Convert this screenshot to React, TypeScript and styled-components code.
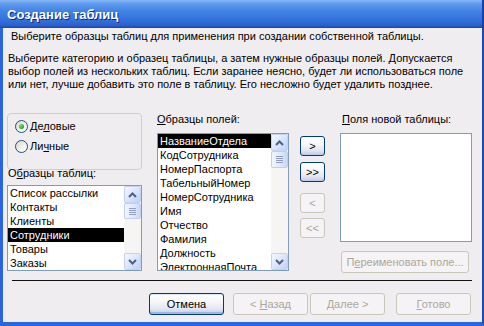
import React from 'react';
import styled, { createGlobalStyle, css } from 'styled-components';

const Global = createGlobalStyle`
  html, body { margin: 0; padding: 0; background: #ffffff; }
  body { font-family: "Liberation Sans", Arial, sans-serif; }
  * { box-sizing: border-box; }
`;

const Window = styled.div`
  width: 484px;
  height: 326px;
  display: flex;
  flex-direction: column;
  overflow: hidden;
`;

const TitleBar = styled.div`
  height: 28px;
  flex: none;
  display: flex;
  align-items: center;
  padding: 1px 0 0 7px;
  background: linear-gradient(
    to bottom,
    #86b7f6 0%,
    #5f9bee 14%,
    #4384e4 38%,
    #3372dc 70%,
    #2a62d0 90%,
    #1c45aa 100%
  );
  border-right: 2px solid #1b3ea8;
  color: #ffffff;
  font: bold 13px "Liberation Sans", Arial, sans-serif;
  text-shadow: 1px 1px 0 #0d2778;
`;

const Frame = styled.div`
  flex: 1;
  display: flex;
  flex-direction: column;
  background: #f0edf0;
  border-left: 3px solid #2b64e0;
  border-right: 2px solid #1d47bd;
  border-bottom: 4px solid #2b64e0;
  font-size: 11px;
  color: #000000;
`;

const Header = styled.div`
  padding: 2px 0 0 8px;
  line-height: 13px;
  white-space: nowrap;
`;

const Para = styled.div`
  margin-top: 9px;
  padding-left: 5px;
  line-height: 13px;
`;

const ParaLine = styled.div`
  white-space: nowrap;
`;

const Main = styled.div`
  margin-top: 22px;
  padding-left: 4px;
  display: flex;
  align-items: flex-start;
  height: 160px;
`;

const Column = styled.div<{ $w: number; $gap?: number }>`
  width: ${p => p.$w}px;
  flex: none;
  display: flex;
  flex-direction: column;
  margin-left: ${p => p.$gap ?? 0}px;
`;

const Label = styled.div<{ $ml?: number; $mt?: number; $lh?: number }>`
  margin-left: ${p => p.$ml ?? 0}px;
  margin-top: ${p => p.$mt ?? 0}px;
  line-height: ${p => p.$lh ?? 13}px;
  white-space: nowrap;
`;

const Acc = styled.span`
  text-decoration: underline;
  text-underline-offset: 1px;
`;

const GroupBox = styled.div`
  height: 57px;
  border: 1px solid #d0d0bf;
  border-radius: 4px;
  padding: 6px 0 0 7px;
  display: flex;
  flex-direction: column;
  gap: 7px;
`;

const RadioRow = styled.label`
  display: flex;
  align-items: center;
  height: 13px;
  gap: 2px;
  line-height: 13px;
`;

const RadioCircle = styled.span`
  width: 13px;
  height: 13px;
  flex: none;
  border-radius: 50%;
  border: 1px solid #1c5180;
  background: linear-gradient(135deg, #d6d5cf 0%, #f2f1ec 55%, #ffffff 100%);
  display: inline-flex;
  align-items: center;
  justify-content: center;
`;

const RadioDot = styled.span`
  width: 5px;
  height: 5px;
  border-radius: 50%;
  background: radial-gradient(circle at 35% 35%, #7ee47a 0%, #2fb12c 55%, #1a8d18 100%);
`;

const ListBox = styled.div<{ $h: number; $mt: number }>`
  height: ${p => p.$h}px;
  margin-top: ${p => p.$mt}px;
  border: 1px solid #7f9db9;
  background: #ffffff;
  display: flex;
  overflow: hidden;
`;

const Items = styled.div`
  flex: 1;
  min-width: 0;
  overflow: hidden;
`;

const Item = styled.div<{ $sel?: boolean }>`
  height: 14px;
  line-height: 14px;
  padding-left: 2px;
  white-space: nowrap;
  ${p =>
    p.$sel &&
    css`
      background: #000000;
      color: #ffffff;
    `}
`;

const ScrollBar = styled.div`
  width: 17px;
  flex: none;
  display: flex;
  flex-direction: column;
  background: #f6f5f3;
`;

const ScrollBtn = styled.div`
  width: 17px;
  height: 17px;
  flex: none;
  border: 1px solid #c4d2f2;
  border-radius: 2px;
  background: linear-gradient(135deg, #f4f7ff 0%, #dbe5fc 50%, #bfd0f6 100%);
  display: flex;
  align-items: center;
  justify-content: center;
`;

const Track = styled.div`
  flex: 1;
  display: flex;
  flex-direction: column;
`;

const Thumb = styled.div<{ $h: number }>`
  height: ${p => p.$h}px;
  border: 1px solid #c0cff0;
  border-radius: 2px;
  background: linear-gradient(to right, #f2f5fe 0%, #dfe7fb 60%, #c9d7f6 100%);
  display: flex;
  align-items: center;
  justify-content: center;
  &::after {
    content: '';
    width: 7px;
    height: 7px;
    background: repeating-linear-gradient(
      to bottom,
      #8e9dc0 0px,
      #8e9dc0 1px,
      transparent 1px,
      transparent 2px
    );
  }
`;

const ArrowCol = styled.div`
  width: 25px;
  flex: none;
  margin-left: 11px;
  display: flex;
  flex-direction: column;
`;

const XPButton = styled.button<{ $w: number; $h: number; $mt?: number; $ml?: number; $off?: boolean; $def?: boolean }>`
  width: ${p => p.$w}px;
  height: ${p => p.$h}px;
  margin-top: ${p => p.$mt ?? 0}px;
  margin-left: ${p => p.$ml ?? 0}px;
  flex: none;
  padding: 0;
  font: 11px "Liberation Sans", Arial, sans-serif;
  border-radius: 3px;
  display: flex;
  align-items: center;
  justify-content: center;
  white-space: nowrap;
  ${p =>
    p.$off
      ? css`
          border: 1px solid #cac8bb;
          background: #f5f3f5;
          color: #aca899;
        `
      : css`
          border: 1px solid #003c74;
          color: #000000;
          background: linear-gradient(
            to bottom,
            #ffffff 0%,
            #f6f6f8 40%,
            #e2e6f1 75%,
            #bccae9 100%
          );
        `}
  ${p =>
    p.$def &&
    css`
      box-shadow: inset 0 1px 0 #d8e8ff, inset 0 -2px 0 #9fb5ea;
    `}
`;

const Separator = styled.div`
  margin: 7px 10px 0 9px;
  height: 1px;
  background: #111111;
`;

const Footer = styled.div`
  margin-top: 12px;
  padding-right: 11px;
  display: flex;
  justify-content: flex-end;
  align-items: center;
`;

const ChevronUp = () => (
  <svg width="9" height="6" viewBox="0 0 9 6">
    <path d="M1 5 L4.5 1.5 L8 5" fill="none" stroke="#4d6185" strokeWidth="2" />
  </svg>
);

const ChevronDown = () => (
  <svg width="9" height="6" viewBox="0 0 9 6">
    <path d="M1 1 L4.5 4.5 L8 1" fill="none" stroke="#4d6185" strokeWidth="2" />
  </svg>
);

const Scroll: React.FC<{ thumb: number }> = ({ thumb }) => (
  <ScrollBar>
    <ScrollBtn>
      <ChevronUp />
    </ScrollBtn>
    <Track>
      <Thumb $h={thumb} />
    </Track>
    <ScrollBtn>
      <ChevronDown />
    </ScrollBtn>
  </ScrollBar>
);

const tables = ['Список рассылки', 'Контакты', 'Клиенты', 'Сотрудники', 'Товары', 'Заказы'];
const fields = [
  'НазваниеОтдела',
  'КодСотрудника',
  'НомерПаспорта',
  'ТабельныйНомер',
  'НомерСотрудника',
  'Имя',
  'Отчество',
  'Фамилия',
  'Должность',
  'ЭлектроннаяПочта',
];

export default function App() {
  return (
    <>
      <Global />
      <Window>
        <TitleBar>Создание таблиц</TitleBar>
        <Frame>
          <Header>Выберите образцы таблиц для применения при создании собственной таблицы.</Header>
          <Para>
            <ParaLine>Выберите категорию и образец таблицы, а затем нужные образцы полей. Допускается</ParaLine>
            <ParaLine>выбор полей из нескольких таблиц. Если заранее неясно, будет ли использоваться поле</ParaLine>
            <ParaLine>или нет, лучше добавить это поле в таблицу. Его несложно будет удалить позднее.</ParaLine>
          </Para>
          <Main>
            <Column $w={135}>
              <GroupBox>
                <RadioRow>
                  <RadioCircle>
                    <RadioDot />
                  </RadioCircle>
                  <span>
                    Де<Acc>л</Acc>овые
                  </span>
                </RadioRow>
                <RadioRow>
                  <RadioCircle />
                  <span>
                    Ли<Acc>ч</Acc>ные
                  </span>
                </RadioRow>
              </GroupBox>
              <Label $ml={1} $mt={-2} $lh={11}>
                О<Acc>б</Acc>разцы таблиц:
              </Label>
              <ListBox $h={86} $mt={6}>
                <Items>
                  {tables.map(t => (
                    <Item key={t} $sel={t === 'Сотрудники'}>
                      {t}
                    </Item>
                  ))}
                </Items>
                <Scroll thumb={16} />
              </ListBox>
            </Column>
            <Column $w={132} $gap={15}>
              <Label>
                <Acc>О</Acc>бразцы полей:
              </Label>
              <ListBox $h={138} $mt={7}>
                <Items>
                  {fields.map(f => (
                    <Item key={f} $sel={f === 'НазваниеОтдела'}>
                      {f}
                    </Item>
                  ))}
                </Items>
                <Scroll thumb={17} />
              </ListBox>
            </Column>
            <ArrowCol>
              <XPButton $w={25} $h={20} $mt={23}>&gt;</XPButton>
              <XPButton $w={25} $h={20} $mt={6}>&gt;&gt;</XPButton>
              <XPButton $w={25} $h={20} $mt={11} $off>&lt;</XPButton>
              <XPButton $w={25} $h={20} $mt={5} $off>&lt;&lt;</XPButton>
            </ArrowCol>
            <Column $w={132} $gap={15}>
              <Label $ml={2}>
                <Acc>П</Acc>оля новой таблицы:
              </Label>
              <ListBox $h={109} $mt={7} />
              <XPButton $w={128} $h={22} $mt={9} $ml={1} $off>
                <span>
                  П<Acc>е</Acc>реименовать поле...
                </span>
              </XPButton>
            </Column>
          </Main>
          <Separator />
          <Footer>
            <XPButton $w={75} $h={22} $def>Отмена</XPButton>
            <XPButton $w={75} $h={22} $ml={9} $off>
              <span>
                &lt; <Acc>Н</Acc>азад
              </span>
            </XPButton>
            <XPButton $w={75} $h={22} $ml={2} $off>
              <span>
                <Acc>Д</Acc>алее &gt;
              </span>
            </XPButton>
            <XPButton $w={75} $h={22} $ml={11} $off>
              <span>
                <Acc>Г</Acc>отово
              </span>
            </XPButton>
          </Footer>
        </Frame>
      </Window>
    </>
  );
}
